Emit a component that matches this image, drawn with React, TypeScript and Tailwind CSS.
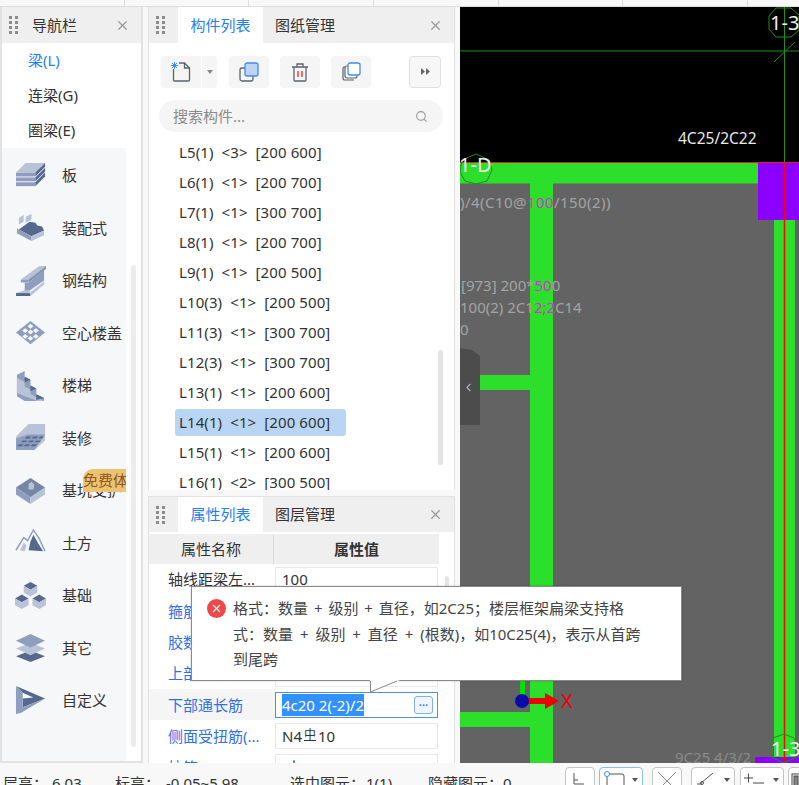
import React from "react";
import { Search, X, ChevronLeft } from "lucide-react";

const L = "#b9c3d8";
const M = "#8f9ebf";
const D = "#55698f";

// sidebar category icons, all on a 32x32 box
const icons: Record<string, React.ReactNode> = {
  slab: (
    <>
      <path d="M1 13 11 3h20L21 13z" fill={L} />
      <path d="M1 13h20v4H1z" fill={M} />
      <path d="M21 13 31 3v4L21 17z" fill={D} />
      <path d="M1 18h20v4H1z" fill={M} />
      <path d="M21 18 31 8v4L21 22z" fill={D} />
      <path d="M1 23h20v4H1z" fill={M} />
      <path d="M21 23 31 13v4L21 27z" fill={D} />
    </>
  ),
  prefab: (
    <>
      <path d="M4 6l5-3v7l-5 3z" fill={L} />
      <path d="M11 5l6-3v6l-6 3z" fill={L} />
      <path d="M4 18 15 10l6 1 2 3 5 1 2 4-13 6z" fill={D} />
      <path d="M2 17l2 1 13 7v5L2 22z" fill={M} />
      <path d="M17 25l13-6v5l-13 6z" fill={L} />
    </>
  ),
  steel: (
    <>
      <path d="M6 15 25 1h7l-18 14z" fill={L} />
      <path d="M6 15h8v3H6z" fill={M} />
      <path d="M14 15 32 1v3L14 18z" fill={D} opacity=".7" />
      <path d="M10 18h4l16-13v11L14 27h-4z" fill={M} />
      <path d="M1 29l9-3h6l-1 3z" fill={L} />
      <path d="M1 29h15v3H1z" fill={D} />
      <path d="M15 29l15-12v3L16 32z" fill={L} />
    </>
  ),
  hollow: (
    <>
      <path d="M16 4 31 16 16 28 1 16z" fill={M} />
      <g fill="#f6f7f9">
        <path d="M16 7l3 2.500-3 2.500-3-2.500z" />
        <path d="M10.500 11.500l3 2.500-3 2.500-3-2.500z" />
        <path d="M21.500 11.500l3 2.500-3 2.500-3-2.500z" />
        <path d="M16 13l3 2.500-3 2.500-3-2.500z" />
        <path d="M10.500 17.500l3 2.500-3 2.500-3-2.500z" />
        <path d="M21.500 17.500l3 2.500-3 2.500-3-2.500z" />
        <path d="M16 19.500l3 2.500-3 2.500-3-2.500z" />
      </g>
    </>
  ),
  stairs: (
    <>
      <path d="M2 5 10 1v6l6 3v6l6 3v6l8 4v4L10 32 2 27z" fill={M} />
      <path d="M2 8l8 4v5l6 3v5l8 4 6 3-4 1L2 24z" fill={L} />
      <path d="M10 7l6 3-6 3zM16 16l6 3-6 3zM22 25l8 4-8 2z" fill={D} />
    </>
  ),
  finish: (
    <>
      <path d="M1 15 14 2h17v17L20 29H1z" fill={L} />
      <path d="M1 17 13 13h18l-11 16H1z" fill={M} />
      <g fill={D}>
        <path d="M12 15h5l-2 2h-5zM19 15h5l-2 2h-5zM26 15h4l-2 2h-4z" />
        <path d="M8 19h5l-2 2H6zM15 19h5l-2 2h-5zM22 19h5l-2 2h-5z" />
        <path d="M4 23h5l-2 2H2zM11 23h5l-2 2h-5zM18 23h5l-2 2h-5z" />
      </g>
    </>
  ),
  pit: (
    <>
      <path d="M16 3 31 13 16 23 1 13z" fill={D} opacity=".8" />
      <path d="M1 13l15 10v7L1 20z" fill={M} />
      <path d="M31 13 16 23v7l15-10z" fill={L} />
      <path d="M14 9l3-2 3 3-1 5-5 0z" fill={L} />
    </>
  ),
  earth: (
    <>
      <path d="M1 24 9 11l4 3 6-11 6 9 6 13" fill="none" stroke={M} strokeWidth="1.500" />
      <path d="M14 24l2-9 3-7 5 9 5 8z" fill={D} />
      <path d="M5 24l4-8 3 3-2 6z" fill={L} />
    </>
  ),
  found: (
    <>
      <path d="M16 2l7 4-7 4-7-4z" fill={D} />
      <path d="M9 6l7 4v7l-7-4zM23 6l-7 4v7l7-4z" fill={L} />
      <path d="M7 15l7 4-7 4-7-4z" fill={D} />
      <path d="M0 19l7 4v7l-7-4zM14 19l-7 4v7l7-4z" fill={L} />
      <path d="M25 15l7 4-7 4-7-4z" fill={D} />
      <path d="M18 19l7 4v7l-7-4zM32 19l-7 4v7l7-4z" fill={L} />
    </>
  ),
  other: (
    <>
      <path d="M16 19 31 25 16 31 1 25z" fill={D} />
      <path d="M16 11 31 17 16 24 1 17z" fill={L} />
      <path d="M16 2 31 9 16 16 1 9z" fill={M} />
    </>
  ),
  custom: (
    <>
      <path d="M1 1 31 14 8 23V14l11-1L8 8z" fill={D} />
      <path d="M1 1l7 7v15l23-9-25 15-5 1z" fill={M} />
    </>
  ),
};

const categories = [
  { name: "板", icon: "slab" },
  { name: "装配式", icon: "prefab" },
  { name: "钢结构", icon: "steel" },
  { name: "空心楼盖", icon: "hollow" },
  { name: "楼梯", icon: "stairs" },
  { name: "装修", icon: "finish" },
  { name: "基坑支护", icon: "pit" },
  { name: "土方", icon: "earth" },
  { name: "基础", icon: "found" },
  { name: "其它", icon: "other" },
  { name: "自定义", icon: "custom" },
];

const members = [
  "L5(1)  <3>  [200 600]",
  "L6(1)  <1>  [200 700]",
  "L7(1)  <1>  [300 700]",
  "L8(1)  <1>  [200 700]",
  "L9(1)  <1>  [200 500]",
  "L10(3)  <1>  [200 500]",
  "L11(3)  <1>  [300 700]",
  "L12(3)  <1>  [300 700]",
  "L13(1)  <1>  [200 600]",
  "L14(1)  <1>  [200 600]",
  "L15(1)  <1>  [200 600]",
  "L16(1)  <2>  [300 500]",
];

const Grip = () => (
  <div className="grid grid-cols-2 gap-x-[3px] gap-y-[2px]">
    {[0, 1, 2, 3, 4, 5, 6, 7].map((i) => (
      <span key={i} className="h-[3px] w-[3px] bg-[#8c8c8c]" />
    ))}
  </div>
);

const ToolButton = ({ children }: { children: React.ReactNode }) => (
  <button className="flex h-[32px] w-[40px] items-center justify-center rounded-[4px] bg-[#f5f5f5]">
    {children}
  </button>
);

const BarButton = ({ w, active, children }: { w: string; active?: boolean; children: React.ReactNode }) => (
  <div
    className={`flex h-[30px] shrink-0 items-start rounded-[4px] border bg-white pt-[1px] ${w} ${
      active ? "border-[#8cbcf0] bg-[#eaf3fd]" : "border-[#c4c4c4]"
    }`}
  >
    {children}
  </div>
);

const Caret = () => (
  <span className="mt-[9px] ml-auto mr-[4px] h-0 w-0 border-x-[3px] border-t-[4px] border-x-transparent border-t-[#555]" />
);

const CadCanvas = () => (
  <svg className="h-full w-full" viewBox="0 0 339 756" fontFamily="'Noto Sans', sans-serif">
    <g transform="translate(-460 -7)">
      <rect x="460" y="7" width="339" height="155" fill="#000" />
      <rect x="460" y="162" width="339" height="601" fill="#636363" />
      <path d="M460 51h339M784.500 7v155M774 62l21-20" stroke="#1f8f1f" strokeWidth="1" />
      <path d="M460 173h298" stroke="#2bdf2b" strokeWidth="21" />
      <rect x="530" y="183" width="23" height="580" fill="#2bdf2b" />
      <rect x="460" y="375" width="70" height="15" fill="#2bdf2b" />
      <rect x="460" y="712" width="70" height="15" fill="#2bdf2b" />
      <rect x="774" y="220" width="21" height="543" fill="#2bdf2b" />
      <rect x="758" y="163" width="41" height="57" fill="#8b00ff" />
      <rect x="755" y="757" width="44" height="6" fill="#8b00ff" />
      <path d="M460 162.500h339" stroke="#e02020" strokeWidth="1" />
      <path d="M784.500 162v601" stroke="#ff0000" strokeWidth="1.500" />

      <polygon points="776,8 791,8 799,15 799,30 791,37 776,37 769,29 769,16" fill="none" stroke="#1f8f1f" />
      <polygon points="476,154 489,160 492,170 487,181 476,184 465,181 460,172 462,160" fill="none" stroke="#1f8f1f" />
      <polygon points="784,734 794,738 799,748 796,757 784,763 773,758 769,748 773,738" fill="none" stroke="#1f8f1f" />
      <text x="770" y="30" fontSize="20" fill="#f0f0f0">1-3</text>
      <text x="459" y="172" fontSize="20" fill="#f0f0f0">1-D</text>
      <text x="771" y="756" fontSize="20" fill="#f0f0f0">1-3</text>

      <text x="678" y="144" fontSize="15.500" fill="#e8e8e8">4C25/2C22</text>
      <g fontSize="15" fill="#a3a3a3">
        <text x="460" y="208" letterSpacing=".45">
          )/4(C10@<tspan fill="#d633d6">100</tspan>/150(2))
        </text>
        <text x="461" y="291">
          [973] 200*<tspan fill="#d633d6">50</tspan>0
        </text>
        <text x="460" y="313">
          100(2) 2C1<tspan fill="#d633d6">2;2</tspan>C14
        </text>
        <text x="460" y="335">0</text>
        <text x="675" y="763" fill="#8a8a8a">9C25 4/3/2</text>
      </g>

      <polygon points="460,348 472,350 480,356 480,425 460,425" fill="#4c4c4c" />

      <rect x="520" y="680" width="5" height="18" fill="#00e000" />
      <path d="M527 698h18v-5l14 8-14 8v-5h-18z" fill="#f00000" />
      <circle cx="522" cy="701" r="7" fill="#0a0aa8" />
      <text x="561" y="708" fontSize="20" fill="#f00000">X</text>
    </g>
  </svg>
);

export default function App() {
  return (
    <div className="relative flex h-[785px] w-[799px] flex-col overflow-hidden bg-[#f8f8f8] font-['Noto_Sans','Noto_Sans_CJK_SC',sans-serif] text-[15px] text-[#333]">
      {/* top strip of tabs, only its lower edge is visible */}
      <div className="flex h-[7px] shrink-0 border-b border-[#dcdcdc]">
        {[0, 1, 2, 3, 4, 5].map((i) => (
          <div key={i} className="w-[124.700px] border-r border-[#dcdcdc]" />
        ))}
      </div>

      <div className="flex h-[756px] shrink-0">
        {/* navigation */}
        <aside className="relative flex h-full w-[143px] shrink-0 flex-col border-x-2 border-b-2 border-[#e2e2e2] bg-white">
          <header className="flex h-[36px] shrink-0 items-center bg-[#efefef] pl-[7px] pr-[11px]">
            <Grip />
            <span className="ml-[14px]">导航栏</span>
            <X size={15} className="ml-auto text-[#9a9a9a]" />
          </header>
          <ul className="flex h-[105px] shrink-0 flex-col pl-[26px] pt-[0px]">
            <li className="flex h-[35.500px] items-center text-[#1f7ff0]">梁(L)</li>
            <li className="flex h-[35.500px] items-center">连梁(G)</li>
            <li className="flex h-[35.500px] items-center">圈梁(E)</li>
          </ul>
          <div className="flex w-[124px] flex-1 flex-col bg-[#f6f7f9] pt-[1px]">
            {categories.map((c) => (
              <div key={c.name} className="relative flex h-[52.500px] shrink-0 items-center pl-[13px]">
                <svg viewBox="0 0 32 32" className="h-[31px] w-[31px] shrink-0">
                  {icons[c.icon]}
                </svg>
                <span className="ml-[16px] whitespace-nowrap">{c.name}</span>
                {c.icon === "pit" && (
                  <span className="absolute left-[81px] top-[5px] h-[23px] w-[43px] overflow-hidden whitespace-nowrap rounded-tl-[10px] bg-[#efc272] text-[#8a5a20]">
                    免费体验
                  </span>
                )}
              </div>
            ))}
          </div>
          <span className="absolute left-[129px] top-[258px] h-[482px] w-[5px] rounded-full bg-[#ececec]" />
        </aside>

        {/* member list and properties */}
        <div className="ml-[5px] flex h-full w-[307px] shrink-0 flex-col gap-[6px]">
          <section className="relative flex h-[483px] shrink-0 flex-col overflow-hidden border-x border-[#e2e2e2] bg-white">
            <header className="flex h-[36px] shrink-0 items-center bg-[#efefef] pl-[7px] pr-[11px]">
              <Grip />
              <span className="ml-[13px] flex h-full w-[85px] items-center justify-center bg-white text-[#1f7ff0]">构件列表</span>
              <span className="ml-[12px]">图纸管理</span>
              <X size={15} className="ml-auto text-[#9a9a9a]" />
            </header>
            <div className="flex h-[49px] shrink-0 items-center pl-[12px] pt-[8px]">
              <button className="flex h-[32px] w-[40px] items-center justify-center rounded-l-[4px] bg-[#f5f5f5]">
                <svg width="22" height="22" viewBox="0 0 22 22" fill="none">
                  <path d="M3.500 8v11a1 1 0 0 0 1 1h14a1 1 0 0 0 1-1V7l-5-5H9" stroke="#5c6270" strokeWidth="1.300" />
                  <path d="M14.500 2v5h5" stroke="#5c6270" strokeWidth="1.300" />
                  <path d="M2 2l5 5M7 2 2 7M4.500 1v7M1 4.500h7" stroke="#3f8cf0" strokeWidth="1" />
                </svg>
              </button>
              <button className="ml-[1px] flex h-[32px] w-[15px] items-center justify-center rounded-r-[4px] bg-[#f5f5f5]">
                <span className="h-0 w-0 border-x-[3px] border-t-[4px] border-x-transparent border-t-[#888]" />
              </button>
              <div className="ml-[12px] flex gap-[11px]">
                <ToolButton>
                  <svg width="20" height="20" viewBox="0 0 20 20" fill="none">
                    <rect x="1" y="6" width="13" height="13" rx="2" stroke="#5c6270" strokeWidth="1.300" />
                    <rect x="6" y="1" width="13" height="13" rx="2" fill="#bcd4f5" stroke="#3f8cf0" strokeWidth="1.300" />
                  </svg>
                </ToolButton>
                <ToolButton>
                  <svg width="18" height="20" viewBox="0 0 18 20" fill="none">
                    <path d="M1 5h16M6 5V2h6v3M3 5v13a1 1 0 0 0 1 1h10a1 1 0 0 0 1-1V5" stroke="#5c6270" strokeWidth="1.300" />
                    <path d="M7 9v6M11 9v6" stroke="#e8413c" strokeWidth="1.500" />
                  </svg>
                </ToolButton>
                <ToolButton>
                  <svg width="20" height="20" viewBox="0 0 20 20" fill="none">
                    <path d="M4 5H3a2 2 0 0 0-1 2v10a2 2 0 0 0 2 1h9M2 8" stroke="#5c6270" strokeWidth="1.200" />
                    <rect x="4" y="4" width="12" height="12" rx="2" fill="#fff" stroke="#5c6270" strokeWidth="1.200" />
                    <rect x="7" y="1" width="12" height="12" rx="2" fill="#fff" stroke="#3f8cf0" strokeWidth="1.300" />
                  </svg>
                </ToolButton>
              </div>
              <button className="ml-[38px] flex h-[32px] w-[32px] items-center justify-center rounded-[4px] border border-[#e0e0e0] bg-[#f7f7f7]">
                <svg width="9" height="7" viewBox="0 0 9 7" fill="#666">
                  <path d="M0 0l4 3.500L0 7zM5 0l4 3.500L5 7z" />
                </svg>
              </button>
            </div>
            <div className="ml-[10px] mt-[8px] flex h-[32px] w-[284px] shrink-0 items-center rounded-full bg-[#f5f5f5] pl-[14px] pr-[15px] text-[#8a8a8a]">
              <span>搜索构件...</span>
              <Search size={13} className="ml-auto text-[#9a9a9a]" />
            </div>
            <ul className="mt-[5px] flex flex-col pl-[30px] tracking-[0.1px]">
              {members.map((m) => (
                <li
                  key={m}
                  className={`-ml-[4px] flex w-[171px] shrink-0 items-center whitespace-pre rounded-[3px] pl-[4px] ${
                    m.startsWith("L14") ? "my-[1.500px] h-[27px] bg-[#b8d6f3]" : "h-[30px]"
                  }`}
                >
                  {m}
                </li>
              ))}
            </ul>
            <span className="absolute left-[289px] top-[343px] h-[115px] w-[5px] rounded-full bg-[#e4e4e4]" />
          </section>

          <section className="relative flex h-[267px] shrink-0 flex-col overflow-hidden border-x border-t border-[#e2e2e2] bg-white">
            <header className="flex h-[35px] shrink-0 items-center bg-[#efefef] pl-[7px] pr-[11px]">
              <Grip />
              <span className="ml-[13px] flex h-full w-[85px] items-center justify-center bg-white text-[#1f7ff0]">属性列表</span>
              <span className="ml-[12px]">图层管理</span>
              <X size={15} className="ml-auto text-[#9a9a9a]" />
            </header>
            <div className="mt-[2px] flex h-[30px] w-[290px] shrink-0 bg-[#efefef]">
              <span className="flex w-[125px] items-center justify-center border-r border-[#dcdcdc]">属性名称</span>
              <span className="flex flex-1 items-center justify-center font-bold">属性值</span>
            </div>
            <div className="flex flex-col">
              {[
                { label: "轴线距梁左...", value: "100" },
                { label: "箍筋", value: "", link: true },
                { label: "胶数", value: "", link: true },
                { label: "上部通长筋", value: "", link: true },
                { label: "下部通长筋", value: "", link: true, editing: true },
                { label: "侧面受扭筋(...", value: "", link: true, torsion: true },
                { label: "拉筋", value: "(中6)", link: true },
              ].map((row) => (
                <div key={row.label} className="flex h-[31.300px] w-[290px] shrink-0">
                  <span
                    className={`flex w-[126px] items-center whitespace-nowrap pl-[19px] ${row.link ? "text-[#2f6fe8]" : ""} ${
                      row.editing ? "bg-[#f5f5f5]" : ""
                    }`}
                  >
                    {row.label}
                  </span>
                  <div
                    className={`my-auto flex h-[26px] w-[163px] items-center border pl-[6px] ${
                      row.editing ? "border-[#4a90e2]" : "border-[#e8e8e8]"
                    }`}
                  >
                    {row.editing ? (
                      <>
                        <span className="bg-[#3390ff] text-white">4c20 2(-2)/2</span>
                        <span className="ml-auto mr-[4px] flex h-[18px] w-[19px] items-center justify-center rounded-[3px] border border-[#7fb2ea] bg-[#eef5fd] text-[11px] leading-none font-bold text-[#3f7fd0]">
                          ···
                        </span>
                      </>
                    ) : row.torsion ? (
                      <span>
                        N4<span className="mx-[2px] align-[3px] text-[12px] underline">中</span>10
                      </span>
                    ) : (
                      row.value
                    )}
                  </div>
                </div>
              ))}
            </div>
            <span className="absolute left-[296px] top-[79px] h-[40px] w-[4px] rounded-full bg-[#e4e4e4]" />
          </section>
        </div>

        {/* drawing area */}
        <main className="relative ml-[5px] h-full flex-1 overflow-hidden">
          <CadCanvas />
          <ChevronLeft size={13} className="absolute left-[2px] top-[374px] text-[#b0b0b0]" />
        </main>
      </div>

      {/* status bar */}
      <footer className="flex h-[22px] shrink-0 items-start overflow-hidden whitespace-nowrap pl-[3px]">
        <div className="flex pt-[9px]">
          <span className="w-[49px]">层高：</span>
          <span className="w-[63px]">6.03</span>
          <span className="w-[51px]">标高：</span>
          <span className="w-[124px]">-0.05~5.98</span>
          <span className="w-[76px]">选中图元：</span>
          <span className="w-[62px]">1(1)</span>
          <span className="w-[75px]">隐藏图元：</span>
          <span className="w-[12px]">0</span>
        </div>
        <div className="ml-[50px] mt-[4px] flex">
          <BarButton w="w-[30px]">
            <svg width="28" height="26" viewBox="0 0 28 26" fill="none" stroke="#555">
              <path d="M8 4v11h10M8 11h4" />
            </svg>
          </BarButton>
          <BarButton w="ml-[4px] w-[44px]" active>
            <svg width="28" height="26" viewBox="0 0 28 26" fill="none">
              <path d="M7 5h15a2 2 0 0 1 2 2v14M7 5v16" stroke="#555" />
              <circle cx="7" cy="5" r="2.500" fill="#fff" stroke="#3f8cf0" />
            </svg>
            <Caret />
          </BarButton>
          <BarButton w="ml-[9px] w-[30px]">
            <svg width="28" height="26" viewBox="0 0 28 26" fill="none" stroke="#8a8a8a">
              <path d="M5 3l18 18M23 3 5 21" />
            </svg>
          </BarButton>
          <BarButton w="ml-[9px] w-[44px]">
            <svg width="28" height="26" viewBox="0 0 28 26" fill="none" stroke="#555">
              <path d="M21 4 9 14M5 15h5M14 15" />
              <circle cx="10" cy="14" r="1.500" />
            </svg>
            <Caret />
          </BarButton>
          <BarButton w="ml-[5px] w-[44px]">
            <svg width="28" height="26" viewBox="0 0 28 26" fill="none" stroke="#444">
              <path d="M3 9h9M7.500 4.500v9M12 14h11" />
            </svg>
            <Caret />
          </BarButton>
          <BarButton w="ml-[4px] w-[30px]">
            <svg width="28" height="26" viewBox="0 0 28 26" fill="none" stroke="#444">
              <rect x="3" y="5" width="10" height="18" />
              <rect x="5" y="7" width="4" height="14" fill="#888" />
            </svg>
          </BarButton>
        </div>
      </footer>

      {/* validation tooltip */}
      <div className="absolute left-[191px] top-[586px] z-10 flex h-[95px] w-[491px] items-start border border-[#8a8a8a] bg-white pl-[15px] pt-[9px] shadow-[0_0_2px_rgba(0,0,0,0.2)]">
        <span className="mt-[3px] flex h-[19px] w-[19px] shrink-0 items-center justify-center rounded-full bg-[#f04848]">
          <X size={13} className="text-white" strokeWidth={2} />
        </span>
        <p className="ml-[7px] whitespace-nowrap leading-[25.500px] text-[#444] [word-spacing:2px]">
          格式：数量 + 级别 + 直径，如2C25；楼层框架扁梁支持格
          <br />
          <span className="[word-spacing:3px]">式：数量 + 级别 + 直径 + (根数)，如10C25(4)，表示从首跨</span>
          <br />
          到尾跨
        </p>
      </div>
      <svg className="absolute left-[370px] top-[680px] z-20" width="32" height="13" viewBox="0 0 32 13">
        <path d="M0 0v11l30-11z" fill="#fff" />
        <path d="M0.500 1v11L27 1" fill="none" stroke="#8a8a8a" />
      </svg>
    </div>
  );
}
